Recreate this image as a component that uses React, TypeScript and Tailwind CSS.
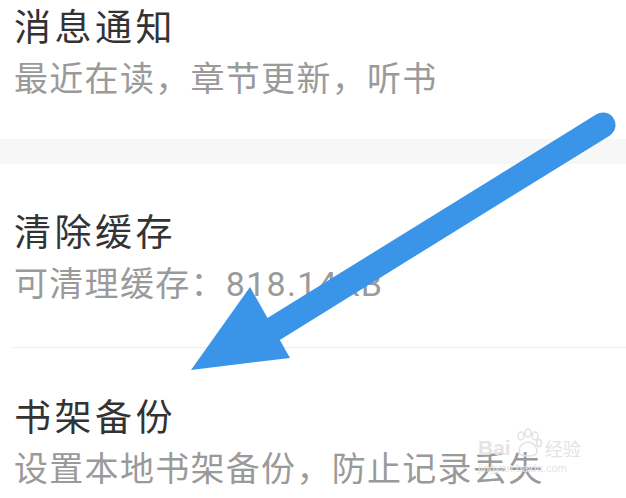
const items = [
  { title: '消息通知', desc: '最近在读，章节更新，听书', top: 'pt-[11px]', bottom: 'pb-[43px]' },
  { title: '清除缓存', desc: '可清理缓存：818.14KB', top: 'pt-[52px]', bottom: 'pb-[46px]' },
  { title: '书架备份', desc: '设置本地书架备份，防止记录丢失', top: 'pt-[53px]', bottom: 'pb-[40px]' },
];

const Row = ({ title, desc, top, bottom }: { title: string; desc: string; top: string; bottom: string }) => (
  <div className={`flex flex-col gap-[15px] pl-[14px] ${top} ${bottom}`}>
    <span className="text-[37px] leading-[36px] tracking-[3.5px] text-[#333333]">{title}</span>
    <span className="text-[34px] leading-[34px] tracking-[1.3px] text-[#9a9a9a] whitespace-nowrap">{desc}</span>
  </div>
);

const Arrow = () => (
  <svg className="absolute inset-0 pointer-events-none" width="626" height="498" viewBox="0 0 626 498">
    <line x1="603" y1="125" x2="272" y2="330" stroke="#3a95e9" strokeWidth="25" strokeLinecap="round" />
    <polygon points="191,370 250,287 290,358" fill="#3a95e9" />
  </svg>
);

const Watermark = () => (
  <div className="absolute left-[478px] top-[428px] flex flex-col items-start text-[#e4e4e4] pointer-events-none">
    <div className="flex items-end gap-[2px]">
      <span className="text-[21px] leading-[20px] font-bold font-['Liberation_Sans',sans-serif]">Bai</span>
      <svg width="30" height="30" viewBox="0 0 30 30" fill="none" stroke="#e2e2e2" strokeWidth="1.5">
        <ellipse cx="8" cy="8" rx="3" ry="4" />
        <ellipse cx="15" cy="5" rx="3" ry="4" />
        <ellipse cx="22" cy="8" rx="3" ry="4" />
        <ellipse cx="26" cy="15" rx="2.5" ry="3.5" />
        <path d="M6 24c0-6 4-10 9-10s9 4 9 10c0 3-3 4-9 4s-9-1-9-4z" />
      </svg>
      <span className="text-[18px] leading-[20px] font-['Noto_Sans_CJK_SC',sans-serif]">经验</span>
    </div>
    <span className="text-[11px] leading-[12px] mt-[4px] font-['Liberation_Sans',sans-serif]">jingyan.baidu.com</span>
  </div>
);

export default function App() {
  return (
    <div className="relative w-[626px] h-[498px] overflow-hidden bg-white font-['Roboto','Noto_Sans_CJK_SC',sans-serif]">
      <Row {...items[0]} />
      <div className="h-[25px] bg-[#f7f7f7]" />
      <Row {...items[1]} />
      <div className="ml-[13px] h-px bg-[#ececec]" />
      <Row {...items[2]} />
      <Watermark />
      <Arrow />
    </div>
  );
}
